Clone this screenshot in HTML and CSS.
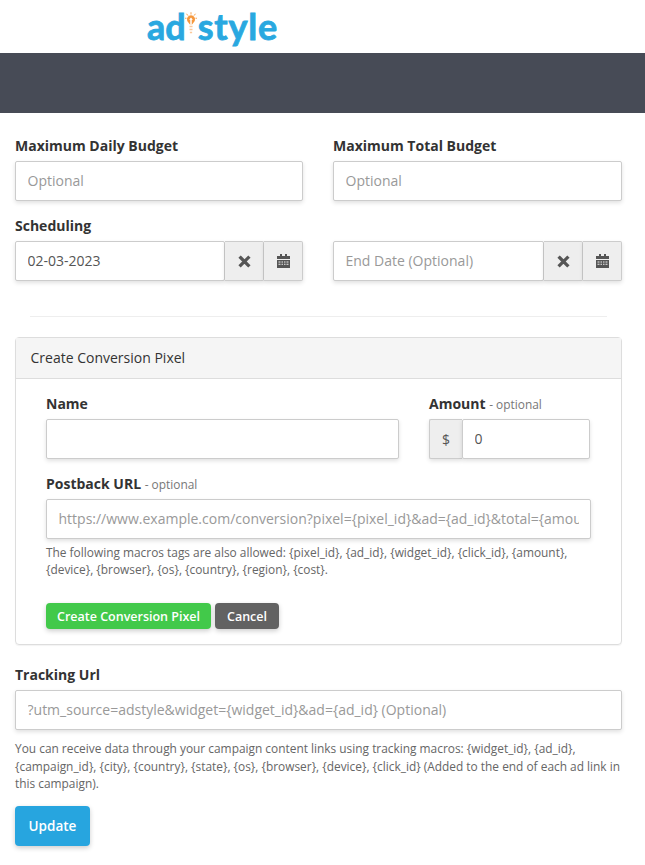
FILE: index.html
```html
<!DOCTYPE html>
<html lang="en">
<head>
<meta charset="utf-8">
<title>Adstyle campaign</title>
<link rel="stylesheet" href="styles.css">
</head>
<body>
<header class="topbar">
  <div class="logo"><span>ad</span><svg class="bulb" viewBox="0 0 16 30" width="12" height="23"><g stroke="#f6a04d" stroke-width="1.3" fill="none"><path d="M8 0v3M2 2l2 2.500M14 2l-2 2.500M0 8h2M16 8h-2"/></g><path d="M8 4a5.500 5.500 0 0 1 5 7.500L9.800 16H6.200L3 11.500A5.500 5.500 0 0 1 8 4z" fill="#f6973c"/><path d="M8 7l2.500 3H9v6H7v-6H5.500z" fill="#fff"/><g fill="#fbc89a"><rect x="6" y="18" width="4" height="2"/><rect x="6" y="22" width="4" height="2"/><rect x="6.500" y="26" width="3" height="2"/></g></svg><span class="logo-tail">style</span></div>
</header>
<div class="banner"></div>
<main class="page">
  <div class="grid">
    <div class="field">
      <label class="label">Maximum Daily Budget</label>
      <input class="input" placeholder="Optional">
    </div>
    <div class="field">
      <label class="label">Maximum Total Budget</label>
      <input class="input" placeholder="Optional">
    </div>
    <div class="field">
      <label class="label">Scheduling</label>
      <div class="group">
        <input class="input grow" value="02-03-2023">
        <span class="addon"><svg class="ico" viewBox="0 0 12 12" width="13" height="13"><path d="M2.500 2.500l7 7M9.500 2.500l-7 7" stroke="#555" stroke-width="3" stroke-linecap="square" fill="none"/></svg></span>
        <span class="addon"><svg class="ico" viewBox="0 0 13 14" width="13" height="14"><path d="M0 2h3V0h2v2h3V0h2v2h3v3H0z" fill="#555"/><path d="M0 6h13v8H0zM1.500 7.500v1h2v-1zm3 0v1h1.500v-1zm2.500 0v1h1.500v-1zm2.500 0v1h2v-1zm-8 2.200v1h2v-1zm3 0v1h1.500v-1zm2.500 0v1h1.500v-1zm2.500 0v1h2v-1z" fill="#555" fill-rule="evenodd"/></svg></span>
      </div>
    </div>
    <div class="field">
      <label class="label blank">&nbsp;</label>
      <div class="group">
        <input class="input grow" placeholder="End Date (Optional)">
        <span class="addon"><svg class="ico" viewBox="0 0 12 12" width="13" height="13"><path d="M2.500 2.500l7 7M9.500 2.500l-7 7" stroke="#555" stroke-width="3" stroke-linecap="square" fill="none"/></svg></span>
        <span class="addon"><svg class="ico" viewBox="0 0 13 14" width="13" height="14"><path d="M0 2h3V0h2v2h3V0h2v2h3v3H0z" fill="#555"/><path d="M0 6h13v8H0zM1.500 7.500v1h2v-1zm3 0v1h1.500v-1zm2.500 0v1h1.500v-1zm2.500 0v1h2v-1zm-8 2.200v1h2v-1zm3 0v1h1.500v-1zm2.500 0v1h1.500v-1zm2.500 0v1h2v-1z" fill="#555" fill-rule="evenodd"/></svg></span>
      </div>
    </div>
  </div>
  <hr class="rule">
  <section class="panel">
    <h2 class="panel-head">Create Conversion Pixel</h2>
    <div class="panel-body">
      <div class="pixel-row">
        <div class="field">
          <label class="label">Name</label>
          <input class="input">
        </div>
        <div class="field">
          <label class="label">Amount <small class="opt">- optional</small></label>
          <div class="group">
            <span class="addon addon-left">$</span>
            <input class="input grow" value="0">
          </div>
        </div>
      </div>
      <div class="field">
        <label class="label">Postback URL <small class="opt">- optional</small></label>
        <input class="input" placeholder="https://www.example.com/conversion?pixel={pixel_id}&amp;ad={ad_id}&amp;total={amount}">
        <p class="help small">The following macros tags are also allowed: {pixel_id}, {ad_id}, {widget_id}, {click_id}, {amount}, {device}, {browser}, {os}, {country}, {region}, {cost}.</p>
      </div>
      <div class="actions">
        <button class="btn green">Create Conversion Pixel</button>
        <button class="btn gray">Cancel</button>
      </div>
    </div>
  </section>
  <div class="field">
    <label class="label">Tracking Url</label>
    <input class="input" placeholder="?utm_source=adstyle&amp;widget={widget_id}&amp;ad={ad_id} (Optional)">
    <p class="help">You can receive data through your campaign content links using tracking macros: {widget_id}, {ad_id}, {campaign_id}, {city}, {country}, {state}, {os}, {browser}, {device}, {click_id} (Added to the end of each ad link in this campaign).</p>
  </div>
  <button class="btn update">Update</button>
</main>
</body>
</html>
```
FILE: styles.css
```css
* { box-sizing: border-box; }
html, body { margin: 0; padding: 0; }
body {
  background: #fff;
  color: #333;
  font-family: "Open Sans", "Liberation Sans", sans-serif;
  font-size: 14px;
  height: 865px;
  overflow: hidden;
}
.topbar { height: 53px; padding-left: 147px; background: #fff; }
.logo {
  display: flex;
  align-items: flex-start;
  color: #29a8e0;
  font-family: "Lato", sans-serif;
  font-weight: 700;
  font-size: 36px;
  line-height: 52px;
  -webkit-text-stroke: 0.8px #29a8e0;
}
.logo-tail { letter-spacing: 0.8px; }
.bulb { margin: 12px 1px 0 -1px; flex: none; }
.banner { height: 60px; background: #474b56; }
.page { padding: 23px 23px 0 15px; }
.grid {
  display: grid;
  grid-template-columns: 288px 289px;
  column-gap: 30px;
  row-gap: 15px;
}
.field { display: flex; flex-direction: column; min-width: 0; }
.label {
  display: block;
  font-weight: 700;
  font-size: 14px;
  line-height: 20px;
  margin-bottom: 5px;
  color: #333;
}
.opt { font-weight: 400; font-size: 11.9px; line-height: 1; color: #777; }
.input {
  display: block;
  width: 100%;
  height: 40px;
  padding: 0 11.5px 2px;
  font: 14px "Open Sans", "Liberation Sans", sans-serif;
  color: #555;
  background: #fff;
  border: 1px solid #ccc;
  border-radius: 2px;
  box-shadow: 0 2px 4px rgba(0,0,0,.12);
  outline: none;
}
.input::placeholder { color: #999; opacity: 1; }
.group { display: flex; height: 40px; }
.grow { flex: 1; min-width: 0; width: auto; }
.addon {
  flex: none;
  width: 39px;
  display: flex;
  align-items: center;
  justify-content: center;
  background: #eee;
  border: 1px solid #ccc;
  border-left-width: 0;
  border-radius: 0 2px 2px 0;
  box-shadow: 0 2px 4px rgba(0,0,0,.12);
  color: #555;
  font-size: 14px;
}
.addon-left { width: 33px; border-left-width: 1px; border-right-width: 0; border-radius: 2px 0 0 2px; }
.rule { margin: 35px 15px 20px 15px; border: 0; border-top: 1px solid #eee; }
.panel {
  border: 1px solid #ddd;
  border-radius: 4px;
  box-shadow: 0 1px 1px rgba(0,0,0,.05);
  margin-bottom: 20px;
}
.panel-head {
  margin: 0;
  height: 41px;
  padding: 0 14.5px;
  background: #f5f5f5;
  border-bottom: 1px solid #ddd;
  font-size: 14px;
  font-weight: 400;
  line-height: 40px;
  color: #333;
}
.panel-body { padding: 15px 30px 15px; }
.pixel-row {
  display: grid;
  grid-template-columns: 353px 161px;
  column-gap: 30px;
  margin-bottom: 15px;
}
.help { margin: 10px 0 0; font-size: 11.9px; line-height: 17.5px; color: #666; }
.help.small { margin-top: 5px; line-height: 17px; }
.actions { display: flex; gap: 4px; margin-top: 25px; }
.btn {
  border: 0;
  color: #fff;
  font: 600 12.5px "Open Sans", "Liberation Sans", sans-serif;
  border-radius: 4px;
  height: 26px;
  padding: 0 12px;
  box-shadow: 0 2px 5px rgba(0,0,0,.2);
}
.green { background: #42c94a; width: 165px; padding: 0; }
.gray { background: #626262; width: 64px; padding: 0; }
.update { background: #27a5df; width: 75px; height: 40px; font-size: 13.5px; margin-top: 13px; padding: 0; }
```
